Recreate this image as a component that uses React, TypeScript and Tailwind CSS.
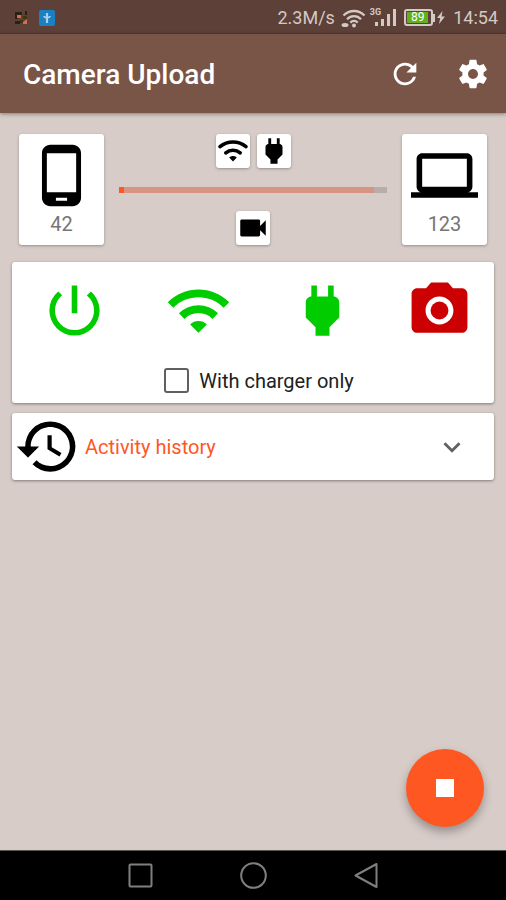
import { useState } from "react";
import {
  MdCameraAlt,
  MdExpandMore,
  MdHistory,
  MdLaptop,
  MdPhoneAndroid,
  MdPower,
  MdPowerSettingsNew,
  MdRefresh,
  MdVideocam,
  MdWifi,
} from "react-icons/md";

const conditions = [
  { icon: MdPowerSettingsNew, label: "Service", color: "text-[#00cc00]" },
  { icon: MdWifi, label: "Wi-Fi", color: "text-[#00cc00]" },
  { icon: MdPower, label: "Charger", color: "text-[#00cc00]" },
  { icon: MdCameraAlt, label: "Camera", color: "text-[#cc0000]" },
];

function GearIcon({ className }: { className?: string }) {
  return (
    <svg viewBox="0 0 24 24" fill="currentColor" className={className}>
      <path d="M19.43 12.98c.04-.32.07-.64.07-.98s-.03-.66-.07-.98l2.11-1.65c.19-.15.24-.42.12-.64l-2-3.46c-.12-.22-.39-.3-.61-.22l-2.49 1c-.52-.4-1.08-.73-1.69-.98l-.38-2.65C14.46 2.18 14.25 2 14 2h-4c-.25 0-.46.18-.49.42l-.38 2.65c-.61.25-1.17.59-1.69.98l-2.49-1c-.23-.09-.49 0-.61.22l-2 3.46c-.13.22-.07.49.12.64l2.11 1.65c-.04.32-.07.65-.07.98s.03.66.07.98l-2.11 1.65c-.19.15-.24.42-.12.64l2 3.46c.12.22.39.3.61.22l2.49-1c.52.4 1.08.73 1.69.98l.38 2.65c.03.24.24.42.49.42h4c.25 0 .46-.18.49-.42l.38-2.65c.61-.25 1.17-.59 1.69-.98l2.49 1c.23.09.49 0 .61-.22l2-3.46c.12-.22.07-.49-.12-.64l-2.11-1.65zM12 15.5c-1.93 0-3.5-1.57-3.5-3.5s1.57-3.5 3.5-3.5 3.5 1.57 3.5 3.5-1.57 3.5-3.5 3.5z" />
    </svg>
  );
}

// Wi-Fi with rounded ends, used on the small tile
function RoundWifiIcon({ className }: { className?: string }) {
  return (
    <svg viewBox="0 0 34 34" fill="none" stroke="currentColor" strokeWidth="3.6" strokeLinecap="round" className={className}>
      <path d="M4 12.6c7.6-6.2 18.4-6.2 26 0" />
      <path d="M9.800 18.900c4.200-3.600 10.200-3.600 14.400 0" />
      <path d="M13.200 23.600c2.200-2 5.400-2 7.600 0L17 27.600z" fill="currentColor" stroke="none" />
    </svg>
  );
}

function StatusBar() {
  return (
    <div className="flex h-[34px] items-center justify-between border-b border-[#523a31] bg-[#5d4037] pt-0.5 pr-2 pl-3.5 text-[#d3c9c5]">
      <div className="flex items-center gap-2.5">
        <svg viewBox="0 0 15 16" className="h-4 w-[15px]">
          <path d="M1 2h7v3H4v4H1zM11 1h2v4h-2zM1 11h5v3H1z" fill="#2a2013" />
          <path d="M9 6h4v3H9zM6 10h3v3H6z" fill="#3d3518" />
          <path d="M3 5h4v3H3z" fill="#d9694a" />
          <path d="M9 12l4-3v5H9z" fill="#e0694a" />
        </svg>
        <svg viewBox="0 0 16 16" className="h-4 w-4">
          <rect width="16" height="16" rx="2" fill="#1a80c4" />
          <path d="M8 3v10" stroke="#a9d0ea" strokeWidth="2.2" />
          <path d="M5 6c0 2 6 2 6 0" fill="none" stroke="#a9d0ea" strokeWidth="1.6" />
        </svg>
      </div>
      <div className="flex items-center text-[18px] leading-6">
        <span>2.3M/s</span>
        <svg viewBox="0 0 27 20" fill="none" stroke="currentColor" strokeWidth="2.3" className="mr-[3px] ml-[5px] h-5 w-[27px]">
          <path d="M3.5 7.5c6-6 15-6 21 0M7 11.200c4-4 10-4 14 0M10.300 14.600c2.200-2.200 5.200-2.200 7.400 0" />
          <circle cx="14" cy="17.500" r="2" fill="currentColor" stroke="none" />
          <ellipse cx="5" cy="17" rx="3.500" ry="2" fill="currentColor" stroke="none" />
        </svg>
        <span className="self-start text-[9px] leading-3 font-bold">3G</span>
        <svg viewBox="0 0 21 19" fill="currentColor" className="-ml-1.5 h-[19px] w-[21px]">
          <path d="M0 14h3v4H0zM6 11h3v7H6zM12 6h3v12h-3zM18 1h3v17h-3z" />
        </svg>
        <div className="ml-2 flex h-[17px] w-[29px] items-center rounded-[3px] border-2 border-current pl-px">
          <span className="h-[11px] w-[21px] bg-[#62b01e] text-center text-[12px] leading-[11px] text-white">89</span>
        </div>
        <span className="h-2 w-0.5 bg-current" />
        <svg viewBox="0 0 8 13" fill="currentColor" className="ml-0.5 h-[13px] w-2">
          <path d="M5.500 0L0 7h3.200L2 13l6-7.500H4.600z" />
        </svg>
        <span className="ml-2">14:54</span>
      </div>
    </div>
  );
}

function NavBar() {
  return (
    <nav className="flex h-[50px] items-center justify-center gap-[86px] border-t border-[#555] bg-black text-[#808080]">
      <button aria-label="Recent apps">
        <svg viewBox="0 0 27 27" fill="none" stroke="currentColor" strokeWidth="2" className="size-[27px]">
          <rect x="2.500" y="2.500" width="22" height="22" rx="1" />
        </svg>
      </button>
      <button aria-label="Home">
        <svg viewBox="0 0 27 27" fill="none" stroke="currentColor" strokeWidth="2" className="size-[27px]">
          <circle cx="13.500" cy="13.500" r="12.300" />
        </svg>
      </button>
      <button aria-label="Back">
        <svg viewBox="0 0 27 27" fill="none" stroke="currentColor" strokeWidth="2" strokeLinejoin="round" className="size-[27px]">
          <path d="M23.500 2v23L2.500 13.500z" />
        </svg>
      </button>
    </nav>
  );
}

export default function App() {
  const [chargerOnly, setChargerOnly] = useState(false);
  const [uploaded] = useState(2);
  const [queued] = useState(95);

  return (
    <div className="flex min-h-screen flex-col bg-[#d7ccc8] font-['Roboto',sans-serif]">
      <StatusBar />

      {/* App bar */}
      <header className="flex h-[79px] items-center justify-between bg-[#795548] pr-4 pl-[23px] text-white shadow-[0_1px_4px_rgba(0,0,0,0.4)]">
        <h1 className="pt-0.5 text-[28px] leading-8 font-medium">Camera Upload</h1>
        <div className="flex gap-[34px]">
          <button aria-label="Refresh">
            <MdRefresh className="size-[34px]" />
          </button>
          <button aria-label="Settings">
            <GearIcon className="size-[34px]" />
          </button>
        </div>
      </header>

      <main className="relative flex-1 px-3 pt-[21px]">
        {/* Transfer status */}
        <section className="flex justify-between px-[7px]">
          <div className="flex h-[111px] w-[85px] flex-col items-center rounded-[3px] bg-white pt-2 shadow-[0_1px_3px_rgba(0,0,0,0.3)]">
            <MdPhoneAndroid className="size-[67px]" />
            <span className="mt-[3px] text-[20px] leading-6 text-[#757575]">42</span>
          </div>

          <div className="flex flex-1 flex-col items-center justify-between px-[15px]">
            <div className="flex gap-[7px]">
              <div className="size-[34px] rounded-[3px] bg-white shadow-[0_1px_3px_rgba(0,0,0,0.3)]">
                <RoundWifiIcon className="size-[34px]" />
              </div>
              <div className="size-[34px] rounded-[3px] bg-white shadow-[0_1px_3px_rgba(0,0,0,0.3)]">
                <MdPower className="size-[34px]" />
              </div>
            </div>
            <div
              role="progressbar"
              aria-label="Upload progress"
              aria-valuenow={uploaded}
              className="flex h-1.5 w-full bg-[#b8adaa]"
            >
              <div className="bg-[#ff5722]" style={{ width: `${uploaded}%` }} />
              <div className="bg-[#d59580]" style={{ width: `${queued - uploaded}%` }} />
            </div>
            <div className="size-[34px] rounded-[3px] bg-white shadow-[0_1px_3px_rgba(0,0,0,0.3)]">
              <MdVideocam className="size-[34px]" />
            </div>
          </div>

          <div className="flex h-[111px] w-[85px] flex-col items-center rounded-[3px] bg-white pt-2 shadow-[0_1px_3px_rgba(0,0,0,0.3)]">
            <MdLaptop className="size-[67px]" />
            <span className="mt-[3px] text-[20px] leading-6 text-[#757575]">123</span>
          </div>
        </section>

        {/* Conditions */}
        <section className="mt-[17px] h-[141px] rounded-[3px] bg-white pt-[15px] shadow-[0_1px_3px_rgba(0,0,0,0.4)]">
          <div className="grid grid-cols-[124fr_124fr_124fr_110fr] justify-items-center">
            {conditions.map(({ icon: Icon, label, color }) => (
              <button key={label} aria-label={label} className={color}>
                <Icon className="size-[67px]" />
              </button>
            ))}
          </div>
          <label className="mt-6 flex items-center justify-center gap-2.5 pl-3 text-[20px] leading-6 text-[#212121]">
            <input
              type="checkbox"
              checked={chargerOnly}
              onChange={(e) => setChargerOnly(e.target.checked)}
              className="size-[25px] appearance-none rounded-[3px] border-2 border-[#606060] checked:bg-[#ff5722]"
            />
            With charger only
          </label>
        </section>

        {/* History */}
        <button className="mt-2.5 flex w-full items-center rounded-[3px] bg-white pr-[25px] pl-0.5 shadow-[0_1px_3px_rgba(0,0,0,0.4)]">
          <MdHistory className="size-[67px]" />
          <span className="ml-1 flex-1 text-left text-[20px] leading-6 text-[#ff5722]">Activity history</span>
          <MdExpandMore className="size-[34px] text-[#616161]" />
        </button>

        <button
          aria-label="Stop upload"
          className="absolute right-[22px] bottom-[23px] flex size-[78px] items-center justify-center rounded-full bg-[#ff5722] shadow-[0_5px_10px_rgba(0,0,0,0.3)]"
        >
          <span className="size-[18px] bg-white" />
        </button>
      </main>

      <NavBar />
    </div>
  );
}
